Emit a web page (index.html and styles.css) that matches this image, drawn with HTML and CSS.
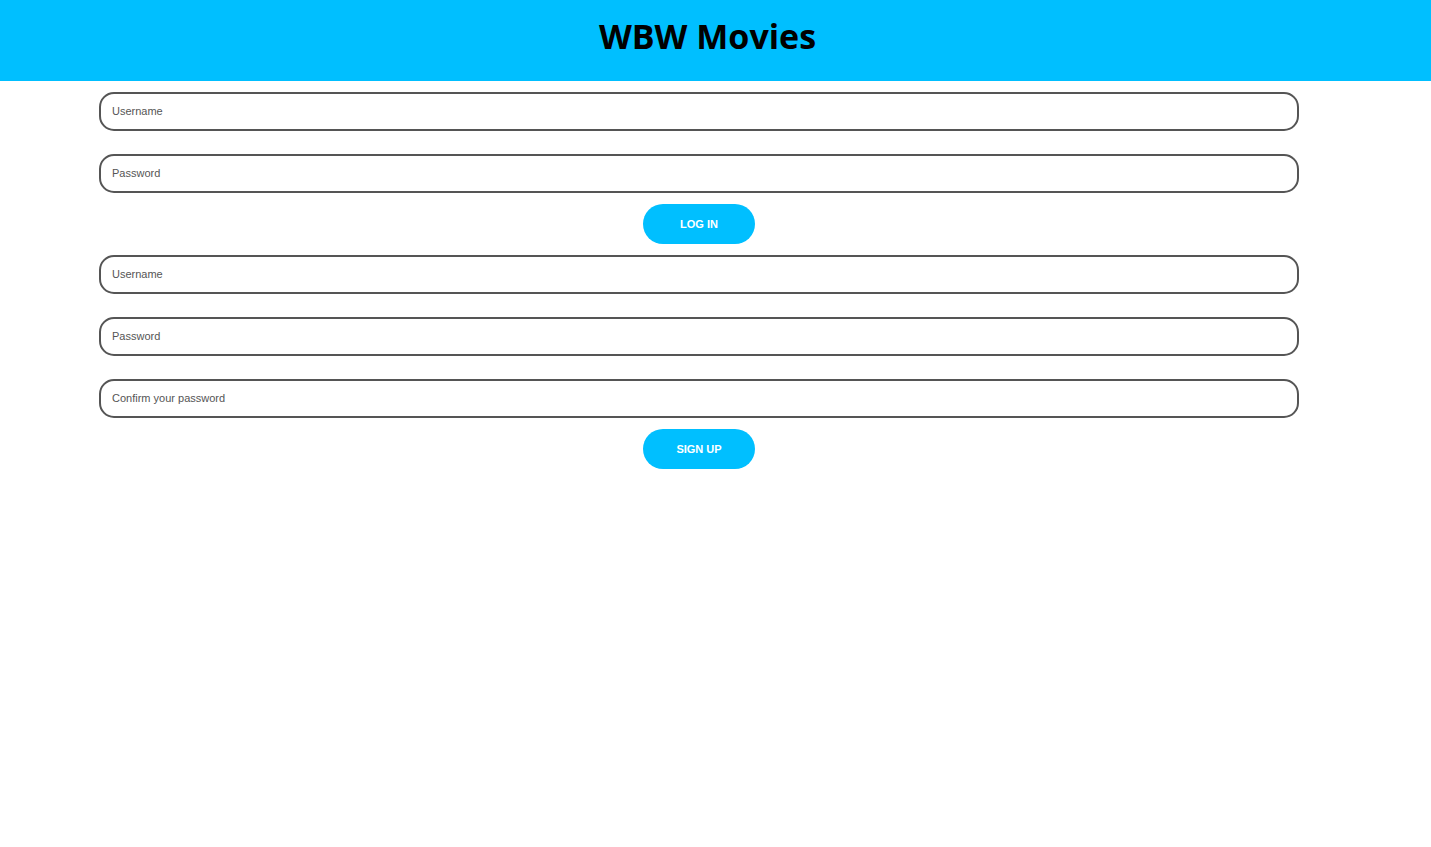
FILE: index.html
```html
<!DOCTYPE html>
<html lang="en">
<head>
<meta charset="utf-8">
<title>WBW Movies</title>
<link rel="stylesheet" href="styles.css">
</head>
<body>
<header class="site-header">
  <h1 class="site-title">WBW Movies</h1>
</header>
<main class="forms">
  <form class="auth-form">
    <input class="field" type="text" placeholder="Username">
    <input class="field" type="password" placeholder="Password">
    <button class="btn" type="button">Log in</button>
  </form>
  <form class="auth-form">
    <input class="field" type="text" placeholder="Username">
    <input class="field" type="password" placeholder="Password">
    <input class="field" type="password" placeholder="Confirm your password">
    <button class="btn" type="button">Sign up</button>
  </form>
</main>
</body>
</html>
```

FILE: styles.css
```css
* { box-sizing: border-box; }
html, body { margin: 0; padding: 0; background: #fff; }
body { font-family: "Liberation Sans", Arial, sans-serif; }

.site-header {
  height: 81px;
  background: #00bfff;
  padding: 19px 16px 0 0;
}
.site-title {
  margin: 0;
  text-align: center;
  font-family: "Open Sans", sans-serif;
  font-weight: 700;
  font-size: 34px;
  line-height: 34px;
  color: #000;
}

.forms {
  display: flex;
  flex-direction: column;
  gap: 11px;
  width: 1200px;
  margin-left: 99px;
  padding-top: 11px;
}
.auth-form {
  display: flex;
  flex-direction: column;
  gap: 11.5px;
  margin: 0;
}
.field {
  display: block;
  width: 100%;
  height: 38.5px;
  border: 2px solid #555;
  border-radius: 15px;
  padding: 0 11px;
  font-family: "Liberation Sans", Arial, sans-serif;
  font-size: 11px;
  color: #333;
  background: #fff;
  outline: none;
}
.field + .field { margin-top: 12px; }
.field::placeholder { color: #555; }

.btn {
  align-self: center;
  width: 112px;
  height: 40px;
  border: none;
  border-radius: 20px;
  background: #00bfff;
  color: #fff;
  font-family: "Liberation Sans", Arial, sans-serif;
  font-weight: 700;
  font-size: 11px;
  text-transform: uppercase;
  cursor: pointer;
}
```
